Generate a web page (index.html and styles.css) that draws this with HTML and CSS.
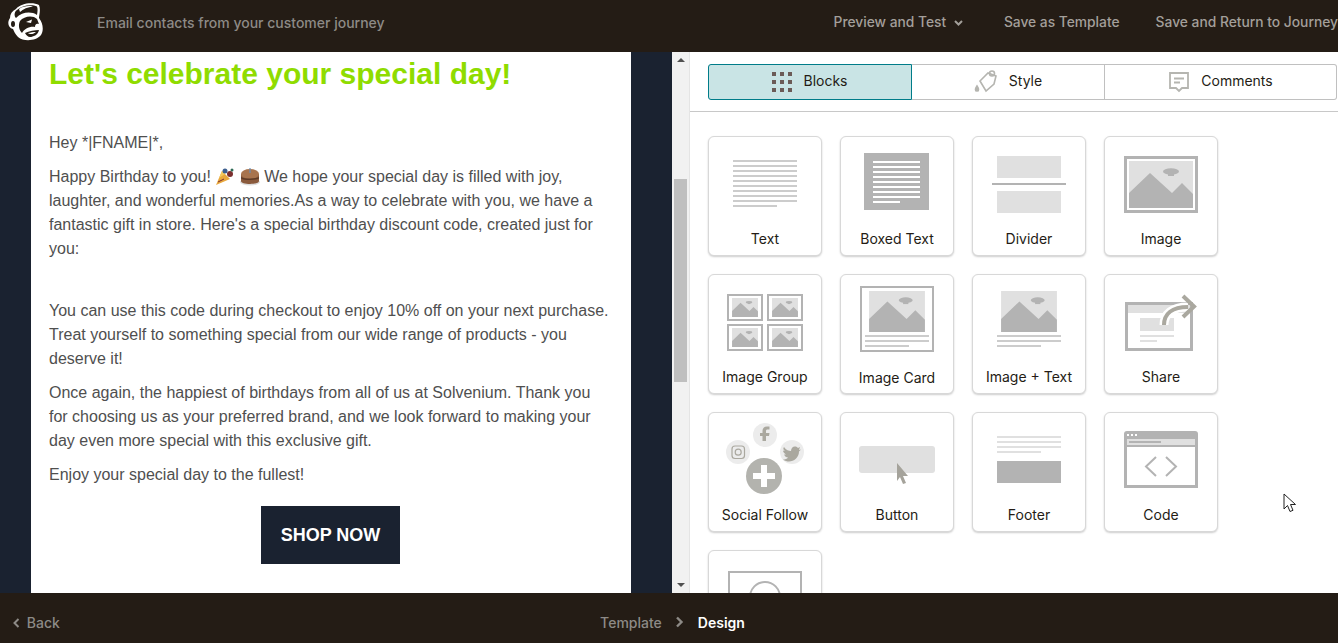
FILE: index.html
```html
<!DOCTYPE html>
<html lang="en">
<head>
  <meta charset="UTF-8">
  <title>Email contacts from your customer journey</title>
  <link rel="stylesheet" href="styles.css">
</head>
<body>

  <svg class="defs" width="0" height="0">
    <symbol id="scene" viewBox="0 0 64 47">
      <rect width="64" height="47" fill="#e0e0e0"/>
      <polygon points="0,32 21,12 43,32 53,22 64,33 64,47 0,47" fill="#b3b3b3"/>
      <ellipse cx="42" cy="10.5" rx="8" ry="3.2" fill="#b3b3b3"/>
      <rect x="39" y="12" width="6" height="3" fill="#b3b3b3"/>
    </symbol>
  </svg>

  <header class="topbar">
    <svg class="logo" width="36" height="40" viewBox="0 0 36 40">
      <path d="M8 7C13 1 25 0 31 3C33 8 31 13 31 16C35 21 36 28 33 33C28 39 16 40 10 35C7 32 6 29 5 27C0 26 -1 20 2 16C2 12 4 9 8 7Z" fill="#fff"/>
      <path d="M9 8C14 3 24 2 29 4.500C30 7 29.500 10 29 13C23 9 14 10 8 16C6 14 6 10 9 8Z" fill="#241c15"/>
      <path d="M11 7C15 4 21 3.500 25 4.500C20 5 15 7 12 10Z" fill="#fff"/>
      <path d="M12 19C16 14 25 13 29 17L31 22C28 21 27 23 27 25C22 24 16 27 14 31C11 28 10 23 12 19Z" fill="#241c15"/>
      <path d="M18 20L24 17.500L23 21Z" fill="#fff"/>
      <path d="M17 31C21 29 27 28 31 28C30 33 25 35 22 35C20 35 18 33 17 31Z" fill="#241c15"/>
      <path d="M20 31C23 30.500 25 30 28 30C26 32 22 33 20 31Z" fill="#fff"/>
      <ellipse cx="5" cy="22" rx="2" ry="3" fill="#241c15"/>
    </svg>
    <div class="topbar-title">Email contacts from your customer journey</div>
    <nav class="topbar-links">
      <a class="preview-link" href="#">Preview and Test
        <svg width="9" height="6" viewBox="0 0 9 6"><path d="M1 1l3.5 3.5L8 1" fill="none" stroke="#a39f9a" stroke-width="2"/></svg>
      </a>
      <a href="#">Save as Template</a>
      <a href="#">Save and Return to Journey</a>
    </nav>
  </header>

  <main class="workspace">
    <section class="preview">
      <div class="email">
        <h1>Let's celebrate your special day!</h1>
        <p class="greeting">Hey *|FNAME|*,</p>
        <p>Happy Birthday to you!
          <svg class="emoji" width="20" height="20" viewBox="0 0 20 20">
            <polygon points="1,19 7,5 15,13" fill="#e9a83c"/>
            <polygon points="4,12 7,5 10,8" fill="#f4c95d"/>
            <circle cx="10" cy="5" r="2.5" fill="#3d5f8f"/>
            <circle cx="15" cy="8" r="3" fill="#7b2f2f"/>
            <circle cx="17" cy="4" r="1.5" fill="#2d6a55"/>
            <path d="M3 16l6-3" stroke="#7b2f2f" stroke-width="1"/>
          </svg>
          <svg class="emoji" width="20" height="20" viewBox="0 0 20 20">
            <ellipse cx="10" cy="16" rx="10" ry="3.5" fill="#ddd"/>
            <path d="M1 8v7c0 2 4 3 9 3s9-1 9-3V8z" fill="#8a5a3c"/>
            <ellipse cx="10" cy="8" rx="9" ry="5" fill="#a8744e"/>
            <path d="M1 11c3 2 15 2 18 0v1.500c-3 2-15 2-18 0z" fill="#5f3b26"/>
            <rect x="9.400" y="2" width="1.200" height="5" fill="#6c8fb5"/>
          </svg>
          We hope your special day is filled with joy, laughter, and wonderful memories.As a way to celebrate with you, we have a fantastic gift in store. Here's a special birthday discount code, created just for you:</p>
        <p class="after-code">You can use this code during checkout to enjoy 10% off on your next purchase. Treat yourself to something special from our wide range of products - you deserve it!</p>
        <p>Once again, the happiest of birthdays from all of us at Solvenium. Thank you for choosing us as your preferred brand, and we look forward to making your day even more special with this exclusive gift.</p>
        <p>Enjoy your special day to the fullest!</p>
        <a class="shop-button" href="#">SHOP NOW</a>
      </div>
    </section>

    <div class="scrollbar">
      <span class="arrow-up"></span>
      <div class="scroll-track"><div class="scroll-thumb"></div></div>
      <span class="arrow-down"></span>
    </div>

    <aside class="sidebar">
      <div class="tabs-row">
        <div class="tabs">
          <button class="tab tab-blocks active">
            <svg width="20" height="20" viewBox="0 0 20 20" fill="#6b5b57">
              <rect width="4" height="4"/><rect x="8" width="4" height="4"/><rect x="16" width="4" height="4"/>
              <rect y="8" width="4" height="4"/><rect x="8" y="8" width="4" height="4"/><rect x="16" y="8" width="4" height="4"/>
              <rect y="16" width="4" height="4"/><rect x="8" y="16" width="4" height="4"/><rect x="16" y="16" width="4" height="4"/>
            </svg>
            <span class="tab-label">Blocks</span>
          </button>
          <button class="tab tab-style">
            <svg width="24" height="24" viewBox="0 0 24 24" fill="none" stroke="#b5b5b0" stroke-width="1.600">
              <path d="M6 11L14 3L22 6L20 14L12 21Z"/>
              <circle cx="18" cy="3.500" r="2.500"/>
              <path d="M3 16c-2 3-2 5 0 5s2-2 0-5z" fill="#b5b5b0"/>
            </svg>
            <span class="tab-label">Style</span>
          </button>
          <button class="tab tab-comments">
            <svg width="22" height="22" viewBox="0 0 22 22" fill="none" stroke="#b5b5b0" stroke-width="1.800">
              <path d="M2 2h18v15h-6l-3 3l-3-3H2z"/>
              <path d="M6 7.500h10M6 11.500h6"/>
            </svg>
            <span class="tab-label">Comments</span>
          </button>
        </div>
      </div>

      <div class="block-grid">
        <div class="block">
          <svg class="block-icon" viewBox="1 1 112 88">
            <g fill="#cccccc">
              <rect x="25" y="24" width="64" height="2"/><rect x="25" y="29" width="64" height="2"/>
              <rect x="25" y="34" width="64" height="2"/><rect x="25" y="39" width="64" height="2"/>
              <rect x="25" y="44" width="64" height="2"/><rect x="25" y="49" width="64" height="2"/>
              <rect x="25" y="54" width="64" height="2"/><rect x="25" y="59" width="64" height="2"/>
              <rect x="25" y="64" width="64" height="2"/><rect x="25" y="69" width="44" height="2"/>
            </g>
          </svg>
          <span class="block-label">Text</span>
        </div>

        <div class="block">
          <svg class="block-icon" viewBox="1 1 112 88">
            <rect x="24" y="17" width="65" height="57" fill="#b3b3b3"/>
            <g fill="#fff">
              <rect x="33" y="25" width="47" height="2"/><rect x="33" y="30" width="47" height="2"/>
              <rect x="33" y="35" width="47" height="2"/><rect x="33" y="40" width="47" height="2"/>
              <rect x="33" y="45" width="47" height="2"/><rect x="33" y="50" width="47" height="2"/>
              <rect x="33" y="55" width="47" height="2"/><rect x="33" y="60" width="47" height="2"/>
              <rect x="33" y="65" width="27" height="2"/>
            </g>
          </svg>
          <span class="block-label">Boxed Text</span>
        </div>

        <div class="block">
          <svg class="block-icon" viewBox="1 1 112 88">
            <rect x="25" y="20" width="64" height="22" fill="#e0e0e0"/>
            <rect x="20" y="47" width="74" height="2" fill="#b3b3b3"/>
            <rect x="25" y="55" width="64" height="22" fill="#e0e0e0"/>
          </svg>
          <span class="block-label">Divider</span>
        </div>

        <div class="block">
          <svg class="block-icon" viewBox="1 1 112 88">
            <rect x="21.500" y="21.500" width="71" height="54" fill="none" stroke="#b3b3b3" stroke-width="3"/>
            <use href="#scene" x="25" y="25" width="64" height="47"/>
          </svg>
          <span class="block-label">Image</span>
        </div>

        <div class="block">
          <svg class="block-icon" viewBox="1 1 112 88">
            <g fill="none" stroke="#b3b3b3" stroke-width="2">
              <rect x="20" y="21" width="34" height="25"/><rect x="60" y="21" width="34" height="25"/>
              <rect x="20" y="51" width="34" height="25"/><rect x="60" y="51" width="34" height="25"/>
            </g>
            <use href="#scene" x="23" y="24" width="28" height="19" preserveAspectRatio="none"/>
            <use href="#scene" x="63" y="24" width="28" height="19" preserveAspectRatio="none"/>
            <use href="#scene" x="23" y="54" width="28" height="19" preserveAspectRatio="none"/>
            <use href="#scene" x="63" y="54" width="28" height="19" preserveAspectRatio="none"/>
          </svg>
          <span class="block-label">Image Group</span>
        </div>

        <div class="block">
          <svg class="block-icon" viewBox="1 1 112 88">
            <rect x="21" y="13" width="72" height="64" fill="none" stroke="#b3b3b3" stroke-width="2"/>
            <use href="#scene" x="25" y="17" width="64" height="41" preserveAspectRatio="none"/>
            <rect x="25" y="61" width="64" height="2" fill="#ccc"/>
            <rect x="25" y="66" width="64" height="2" fill="#ccc"/>
            <rect x="25" y="71" width="44" height="2" fill="#ccc"/>
          </svg>
          <span class="block-label label-low">Image Card</span>
        </div>

        <div class="block">
          <svg class="block-icon" viewBox="1 1 112 88">
            <use href="#scene" x="25" y="17" width="64" height="41" preserveAspectRatio="none"/>
            <rect x="25" y="61" width="64" height="2" fill="#ccc"/>
            <rect x="25" y="66" width="64" height="2" fill="#ccc"/>
            <rect x="25" y="71" width="44" height="2" fill="#ccc"/>
          </svg>
          <span class="block-label">Image + Text</span>
        </div>

        <div class="block">
          <svg class="block-icon" viewBox="1 1 112 88">
            <rect x="22.500" y="29.500" width="65" height="46" fill="none" stroke="#b3b3b3" stroke-width="3"/>
            <rect x="24" y="31" width="62" height="8" fill="#e0e0e0"/>
            <rect x="36" y="44" width="34" height="13" fill="#e0e0e0"/>
            <rect x="36" y="61" width="34" height="2" fill="#e0e0e0"/>
            <rect x="36" y="66" width="17" height="2" fill="#e0e0e0"/>
            <path d="M60 51C60 40 68 33 84 33" fill="none" stroke="#fff" stroke-width="9"/>
            <path d="M60 51C60 40 68 33 84 33" fill="none" stroke="#aaa89f" stroke-width="4"/>
            <path d="M79 22L90 32.500L79 43" fill="none" stroke="#aaa89f" stroke-width="4"/>
          </svg>
          <span class="block-label">Share</span>
        </div>

        <div class="block">
          <svg class="block-icon" viewBox="1 1 112 88">
            <circle cx="57" cy="23" r="12" fill="#ececec"/>
            <circle cx="30" cy="40" r="12" fill="#ececec"/>
            <circle cx="84" cy="40" r="12" fill="#ececec"/>
            <path d="M58 29v-5h3l.5-3H58v-2c0-1 .5-1.500 1.500-1.500H61.500v-3H59c-3 0-4.500 2-4.500 4.500v2H52v3h2.500v5z" fill="#aaa89f"/>
            <rect x="24" y="34" width="12.500" height="12.500" rx="3" fill="none" stroke="#aaa89f" stroke-width="1.200"/>
            <circle cx="30.200" cy="40.200" r="3" fill="none" stroke="#aaa89f" stroke-width="1.200"/>
            <path d="M76 35c2 3 5 4 7 4c0-4 4-6 7-3l2-1l-1 3l2-.5l-2 2c0 6-5 10-10 10c-2 0-4-.5-6-2c2 0 4-.5 5-2c-2 0-3-1-4-3h2c-2-1-3-3-3-4l2 .5c-2-1-2-3-1-4z" fill="#aaa89f"/>
            <circle cx="56" cy="64" r="18" fill="#b3b3ae"/>
            <path d="M53 53h6v8h8v6h-8v8h-6v-8h-8v-6h8z" fill="#fff"/>
          </svg>
          <span class="block-label">Social Follow</span>
        </div>

        <div class="block">
          <svg class="block-icon" viewBox="1 1 112 88">
            <rect x="19" y="34" width="76" height="27" rx="3" fill="#e0e0e0"/>
            <polygon points="57,51 68,64 63,64 66,71 63,72 60,65 57,69" fill="#a5a39b"/>
          </svg>
          <span class="block-label">Button</span>
        </div>

        <div class="block">
          <svg class="block-icon" viewBox="1 1 112 88">
            <g fill="#e0e0e0">
              <rect x="25" y="24" width="64" height="2"/><rect x="25" y="29" width="64" height="2"/>
              <rect x="25" y="34" width="64" height="2"/><rect x="25" y="39" width="44" height="2"/>
            </g>
            <rect x="25" y="49" width="64" height="22" fill="#b3b3b3"/>
          </svg>
          <span class="block-label">Footer</span>
        </div>

        <div class="block">
          <svg class="block-icon" viewBox="1 1 112 88">
            <path d="M20 22a3 3 0 0 1 3-3h68a3 3 0 0 1 3 3v7H20z" fill="#b3b3b3"/>
            <rect x="21.500" y="27" width="71" height="47.500" fill="none" stroke="#b3b3b3" stroke-width="3"/>
            <rect x="23" y="27" width="68" height="6" fill="#e0e0e0"/>
            <rect x="25" y="29" width="32" height="2" fill="#b3b3b3"/>
            <rect x="23" y="33" width="68" height="2" fill="#b3b3b3"/>
            <g fill="#fff">
              <rect x="23" y="22" width="2" height="2"/><rect x="27" y="22" width="2" height="2"/><rect x="31" y="22" width="2" height="2"/>
            </g>
            <path d="M52 45L42 54.500L52 64M62 45L72 54.500L62 64" fill="none" stroke="#b3b3b3" stroke-width="2"/>
          </svg>
          <span class="block-label">Code</span>
        </div>

        <div class="block">
          <svg class="block-icon" viewBox="1 1 112 88">
            <rect x="21" y="22" width="72" height="50" fill="none" stroke="#b3b3b3" stroke-width="2"/>
            <circle cx="57" cy="47" r="15" fill="none" stroke="#b3b3b3" stroke-width="2"/>
          </svg>
        </div>
      </div>
    </aside>

    <svg class="mouse-cursor" width="14" height="21" viewBox="0 0 14 21">
      <path d="M1 1v15l3.500-3.500l2.500 6l3-1.200l-2.500-5.800h5z" fill="#fff" stroke="#222" stroke-width="1"/>
    </svg>
  </main>

  <footer class="bottombar">
    <a class="back-link" href="#">
      <svg width="7" height="10" viewBox="0 0 7 10"><path d="M5.500 1L1.500 5l4 4" fill="none" stroke="#8d8a86" stroke-width="2"/></svg>
      Back
    </a>
    <div class="crumbs">
      <span class="crumb">Template</span>
      <svg width="9" height="12" viewBox="0 0 9 12"><path d="M2 1.500L6.500 6L2 10.500" fill="none" stroke="#8d8a86" stroke-width="2.400"/></svg>
      <span class="crumb current">Design</span>
    </div>
  </footer>

</body>
</html>
```

FILE: styles.css
```css
* {
  box-sizing: border-box;
}

html, body {
  height: 100%;
}

body {
  margin: 0;
  font-family: Inter, 'Noto Sans', sans-serif;
  background: #fff;
  color: #241c15;
  overflow: hidden;
  display: flex;
  flex-direction: column;
}

a {
  text-decoration: none;
}

.defs {
  position: absolute;
}

/* top bar */
.topbar {
  flex: 0 0 52px;
  display: flex;
  align-items: center;
  background: #241c15;
  padding: 0 0 8px 8px;
  font-size: 14px;
  font-weight: 500;
  white-space: nowrap;
}

.logo {
  margin-right: 53px;
}

.topbar-title {
  color: #8d8a86;
}

.topbar-links {
  display: flex;
  gap: 36px;
  margin-left: auto;
  font-size: 13.8px;
}

.topbar-links a {
  color: #a39f9a;
}

.preview-link {
  margin-right: 5px;
}

.preview-link svg {
  margin-left: 4px;
  vertical-align: 1px;
}

/* main area */
.workspace {
  flex: 1;
  display: flex;
  min-height: 0;
  position: relative;
}

.preview {
  flex: 0 0 672px;
  background: #1a2230;
  padding-left: 31px;
  overflow: hidden;
}

.email {
  width: 600px;
  height: 100%;
  background: #fff;
  padding: 4px 18px 0;
  font-family: 'Liberation Sans', Arial, sans-serif;
  font-size: 16px;
  line-height: 24px;
  color: #4f4f4f;
}

.email h1 {
  margin: 0 0 39px;
  font-size: 30px;
  line-height: 36px;
  font-weight: bold;
  color: #8fdc00;
}

.email p {
  margin: 0 0 10px;
}

.email .after-code {
  margin-top: 38px;
}

.emoji {
  vertical-align: -4px;
}

.shop-button {
  display: block;
  width: 139px;
  height: 58px;
  margin: 19px 0 0 212px;
  background: #1a2230;
  color: #fff;
  font-size: 18px;
  font-weight: bold;
  line-height: 58px;
  text-align: center;
}

/* fake scrollbar of the preview */
.scrollbar {
  flex: 0 0 18px;
  display: flex;
  flex-direction: column;
  background: #f1f1f1;
  border-right: 1px solid #e4e4e4;
}

.scroll-track {
  flex: 1;
  padding: 112px 2px 0;
}

.scroll-thumb {
  height: 203px;
  background: #bfbfbf;
}

.arrow-up,
.arrow-down {
  width: 0;
  height: 0;
  flex: 0 0 auto;
  margin-left: 5px;
  border-left: 4px solid transparent;
  border-right: 4px solid transparent;
}

.arrow-up {
  margin-top: 6px;
  margin-bottom: 5px;
  border-bottom: 4px solid #505050;
}

.arrow-down {
  margin-top: 5px;
  margin-bottom: 6px;
  border-top: 4px solid #505050;
}

/* blocks sidebar */
.sidebar {
  flex: 1;
  overflow: hidden;
  background: #fff;
}

.tabs-row {
  padding: 12px 1px 11px 18px;
  border-bottom: 1px solid #c8c8c8;
}

.tabs {
  display: flex;
  height: 36px;
}

.tab {
  display: flex;
  align-items: center;
  justify-content: center;
  gap: 11px;
  background: #fff;
  border: 1px solid #c0c0c0;
  border-left: none;
  font-family: inherit;
  font-size: 14px;
  font-weight: 400;
  color: #241c15;
  padding: 0;
}

.tab-label {
  margin-bottom: 3px;
}

.tab-blocks {
  width: 204px;
}

.tab-style {
  width: 193px;
}

.tab-comments {
  width: 232px;
  border-radius: 0 3px 3px 0;
}

.tab.active {
  background: #c9e4e5;
  border: 1px solid #007c89;
  border-radius: 3px 0 0 3px;
}

.block-grid {
  display: grid;
  grid-template-columns: repeat(4, 114px);
  gap: 18px;
  padding: 24px 18px;
}

.block {
  height: 120px;
  display: flex;
  flex-direction: column;
  align-items: center;
  background: #fff;
  border: 1px solid #d8d8d8;
  border-radius: 6px;
  box-shadow: 0 1px 2px rgba(0, 0, 0, 0.2);
}

.block-icon {
  display: block;
  width: 112px;
  height: 88px;
}

.block-label {
  margin-top: 4px;
  font-size: 14px;
  line-height: 20px;
}

.label-low {
  margin-top: 5px;
}

.mouse-cursor {
  position: absolute;
  left: 1283px;
  top: 441px;
}

/* bottom bar */
.bottombar {
  flex: 0 0 50px;
  display: grid;
  grid-template-columns: 1fr auto 1fr;
  align-items: center;
  padding-top: 8px;
  background: #241c15;
  font-size: 14px;
  font-weight: 500;
}

.back-link {
  grid-column: 1;
  padding-left: 13px;
  color: #8d8a86;
}

.back-link svg {
  margin-right: 3px;
}

.crumbs {
  grid-column: 2;
  display: flex;
  align-items: center;
  gap: 13.5px;
  margin-left: 7px;
}

.crumb {
  color: #8d8a86;
}

.crumb.current {
  color: #fff;
  font-weight: 600;
}
```
